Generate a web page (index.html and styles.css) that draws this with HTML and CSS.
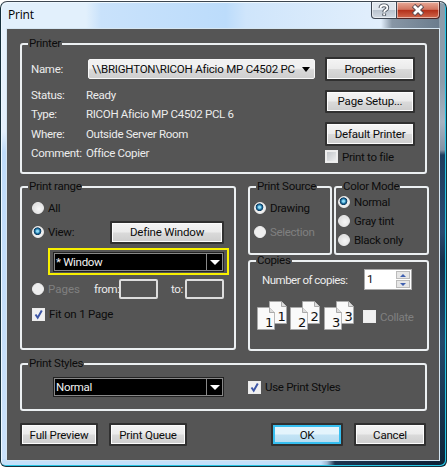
FILE: index.html
```html
<!DOCTYPE html>
<html lang="en">
<head>
<meta charset="utf-8">
<title>Print</title>
<link rel="stylesheet" href="styles.css">
</head>
<body>
<div class="window">
  <header class="titlebar">
    <span class="title">Print</span>
    <div class="caption">
      <span class="help"><svg width="12" height="14" viewBox="0 0 12 14"><path d="M2.500 5Q2.500 2.300 6 2.300T9.300 4.900Q9.300 6.200 7.500 7.100Q6.200 7.800 6.200 9.300M6.200 10.600V12.800" fill="none" stroke="#4a525c" stroke-width="3.800"/><path d="M2.500 5Q2.500 2.300 6 2.300T9.300 4.900Q9.300 6.200 7.500 7.100Q6.200 7.800 6.200 9.300M6.200 10.600V12.300" fill="none" stroke="#fff" stroke-width="1.900"/></svg></span>
      <span class="close"><svg width="14" height="12" viewBox="0 0 14 12"><path d="M2.500 1.500L11.500 10.500M11.500 1.500L2.500 10.500" stroke="#5b4a50" stroke-width="4.800"/><path d="M3 2L11 10M11 2L3 10" stroke="#fff" stroke-width="2.800"/></svg></span>
    </div>
  </header>
  <main class="dialog">
    <fieldset class="group printer">
      <legend>Printer</legend>
      <div class="printer-body">
        <div class="details">
          <label class="lt">Name:</label>
          <div class="select-light"><span>\\BRIGHTON\RICOH Aficio MP C4502 PC</span><i class="arrow"></i></div>
          <span class="lt">Status:</span><span class="lt">Ready</span>
          <span class="lt">Type:</span><span class="lt model">RICOH Aficio MP C4502 PCL 6</span>
          <span class="lt">Where:</span><span class="lt">Outside Server Room</span>
          <span class="lt">Comment:</span><span class="lt">Office Copier</span>
        </div>
        <div class="actions">
          <button>Properties</button>
          <button>Page Setup...</button>
          <button>Default Printer</button>
          <label class="choice"><i class="check dim"></i>Print to file</label>
        </div>
      </div>
    </fieldset>

    <div class="columns">
      <fieldset class="group range">
        <legend>Print range</legend>
        <div class="range-body">
          <label class="choice"><i class="radio"></i>All</label>
          <div class="view-row">
            <label class="choice"><i class="radio on"></i>View:</label>
            <button>Define Window</button>
          </div>
          <div class="highlight"><div class="select-dark"><span>* Window</span><b><i class="arrow"></i></b></div></div>
          <div class="pages-row">
            <label class="choice off"><i class="radio"></i>Pages</label>
            <span class="lt from">from:</span><i class="field"></i>
            <span class="lt to">to:</span><i class="field"></i>
          </div>
          <label class="choice fit"><i class="check"><svg viewBox="0 0 13 13"><path d="M3.500 6.500L5.700 9.700L9.800 2.500" /></svg></i>Fit on 1 Page</label>
        </div>
      </fieldset>
      <div class="side">
        <div class="modes">
          <fieldset class="group source">
            <legend>Print Source</legend>
            <div class="source-body">
              <label class="choice"><i class="radio on"></i>Drawing</label>
              <label class="choice off"><i class="radio"></i>Selection</label>
            </div>
          </fieldset>
          <fieldset class="group color">
            <legend>Color Mode</legend>
            <div class="color-body">
              <label class="choice"><i class="radio on"></i>Normal</label>
              <label class="choice"><i class="radio"></i>Gray tint</label>
              <label class="choice"><i class="radio"></i>Black only</label>
            </div>
          </fieldset>
        </div>
        <fieldset class="group copies">
          <legend>Copies</legend>
          <div class="count">
            <span class="lt">Number of copies:</span>
            <div class="spin"><span>1</span><div class="steps"><b><i class="up"></i></b><b><i class="down"></i></b></div></div>
          </div>
          <div class="collate">
            <svg class="sheets" width="98" height="31" viewBox="0 0 98 31">
              <defs>
                <path id="page" d="M.5.500H12.500L17.500 5.500V22.500H.5Z" fill="#fafafa" stroke="#aaa" stroke-width=".8"/>
                <path id="fold" d="M12.500.5V5.500H17.500" fill="#ddd" stroke="#999" stroke-width=".8"/>
              </defs>
              <g><use href="#page" x="12"/><use href="#fold" x="12"/><text x="20.500" y="19.500">1</text><use href="#page" y="6"/><use href="#fold" y="6"/><text x="8" y="26">1</text></g>
              <g transform="translate(33)"><use href="#page" x="12"/><use href="#fold" x="12"/><text x="20.500" y="19.500">2</text><use href="#page" y="6"/><use href="#fold" y="6"/><text x="8" y="26">2</text></g>
              <g transform="translate(67)"><use href="#page" x="12"/><use href="#fold" x="12"/><text x="20.500" y="19.500">3</text><use href="#page" y="6"/><use href="#fold" y="6"/><text x="8" y="26">3</text></g>
            </svg>
            <label class="choice off"><i class="check"></i>Collate</label>
          </div>
        </fieldset>
      </div>
    </div>

    <fieldset class="group styles">
      <legend>Print Styles</legend>
      <div class="styles-body">
        <div class="select-dark"><span>Normal</span><b><i class="arrow"></i></b></div>
        <label class="choice"><i class="check"><svg viewBox="0 0 13 13"><path d="M3.500 6.500L5.700 9.700L9.800 2.500" /></svg></i>Use Print Styles</label>
      </div>
    </fieldset>

    <footer class="buttons">
      <button class="preview">Full Preview</button>
      <button class="queue">Print Queue</button>
      <button class="ok">OK</button>
      <button class="cancel">Cancel</button>
    </footer>
  </main>
</div>
</body>
</html>
```
FILE: styles.css
```css
* { box-sizing: border-box; }
body {
  margin: 0;
  background: #fff;
  font: 11.5px/14px Roboto, "Liberation Sans", sans-serif;
  letter-spacing: -.3px;
  color: #0c0c0c;
  overflow: hidden;
}
.window {
  width: 447px;
  height: 466px;
  margin-top: 1px;
  padding: 0 6px 5px 5px;
  border: 1px solid #16303c;
  border-top-color: #3c4650;
  border-radius: 7px 7px 6px 6px;
  box-shadow: inset -1px -1px 0 #25c5e4, inset 1px 1px 0 #eef8ff;
  background:
    linear-gradient(#8d9dab 0, #8d9dab 80px, #a7b4c2 120px, #8393a4 148px, #1d3d5e 153px, #2a4a70 230px, #17304a 260px, #23486a 340px, #0e2438) right / 7px 100% no-repeat,
    linear-gradient(90deg, #c3e0fa 0, #c3e0fa 320px, #9db8d2 326px, #1d3550 334px, #0c2036) bottom / 100% 7px no-repeat,
    linear-gradient(90deg, #e2f0fc 0, #e2f0fc 85px, #c9e2fb 100px, #bcdcfb 225px, #cfe5fb 245px, #e2effc 380px, #8796a5 391px, #67798a 100%) top / 100% 28px no-repeat,
    linear-gradient(#e8f3fd 0, #e4f0fc 130px, #bfdcfa 150px, #cbe2fb 100%);
}
.titlebar {
  height: 26px;
  display: flex;
  justify-content: space-between;
}
.title {
  padding: 6px 0 0 2px;
  font: 12px/14px "Open Sans", sans-serif;
  letter-spacing: -.2px;
  color: #000;
}
.caption { display: flex; height: 17px; }
.caption span {
  display: flex;
  align-items: center;
  justify-content: center;
  border: 1px solid #3d4652;
  border-top: 0;
  box-shadow: inset 0 0 0 1px rgba(255, 255, 255, .5);
}
.help { width: 26px; border-radius: 0 0 0 4px; background: linear-gradient(#dfe6ed 0 48%, #b9c3ce 52%, #d3dbe4); }
.caption .close { width: 43px; border-left: 0; border-radius: 0 0 4px 0; border-color: #4f2525; background: linear-gradient(#e8aa98 0, #d17560 46%, #b4301a 52%, #d0674c); }
.dialog {
  width: 434px;
  height: 433px;
  padding: 8px 12px 0 13px;
  border: 1px solid #d5e6f2;
  background: #555;
}
.group {
  flex: none;
  margin: 0;
  padding: 0;
  min-width: 0;
  border: 2px solid #ecf0f2;
  border-radius: 3px;
}
.group legend {
  height: 14px;
  margin-left: 6px;
  padding: 0 1px;
  line-height: 12px;
  white-space: nowrap;
}
.lt { color: #ececec; white-space: nowrap; }
.printer { width: 407px; height: 137px; }
.printer-body { display: flex; padding: 6px 10px 0; gap: 10px; }
.details {
  display: grid;
  grid-template-columns: 56px 227px;
  grid-template-rows: 28px repeat(4, 19.500px);
  align-items: center;
  width: 283px;
}
.details > .lt { margin-left: -1px; }
.details > .lt:nth-child(even) { margin-left: -2px; }
.details > :nth-child(-n+2) { margin-bottom: 4px; }
.select-light {
  display: flex;
  height: 20px;
  padding: 0 4px 0 3px;
  align-items: center;
  justify-content: space-between;
  border: 1px solid #f8f8f8;
  border-radius: 2px;
  background: linear-gradient(#f1f1f1 45%, #d8d8d8 55%, #cfcfcf);
}
.select-light span { white-space: nowrap; letter-spacing: -.22px; }
.arrow { border: 4px solid transparent; border-top: 5px solid #000; border-bottom: 0; }
.actions { display: flex; flex-direction: column; width: 90px; }
.actions button { margin-bottom: 9px; }
.actions .choice { margin-top: -5px; }
button {
  flex: none;
  height: 23px;
  padding: 0;
  border: 2px solid #303030;
  border-radius: 1px;
  background: linear-gradient(#f4f4f4 0, #ebebeb 48%, #dadada 52%, #cdcdcd);
  box-shadow: inset 0 0 0 1px #fcfcfc;
  font: inherit;
  letter-spacing: -.2px;
  color: #0c0c0c;
  white-space: nowrap;
}
.actions button { height: 23.500px; }
.choice { display: flex; align-items: center; gap: 4px; height: 14px; white-space: nowrap; }
.off { color: #808080; }
.check { width: 13px; height: 13px; border: 1px solid #ececec; background: #f0f0f0; flex: none; }
.check.dim { background: linear-gradient(135deg, #bec2c6, #f2f2f2); box-shadow: inset 0 0 0 1px #eee; }
.check svg { display: block; margin: -1px; width: 13px; height: 13px; }
.check path { fill: none; stroke: #3c55a5; stroke-width: 2; }
.radio { width: 12px; height: 12px; border-radius: 50%; flex: none; border: 1px solid #eee; background: radial-gradient(circle at 60% 60%, #f7f7f7, #d8d8d8); }
.off .radio { background: #eee; }
.radio.on { background: radial-gradient(circle at 45% 42%, #8fdcf8 0 1px, #176b9c 2.500px, #123c5e 3.500px, #eee 4.200px); }
.columns { display: flex; gap: 12px; margin-top: 6px; }
.range { width: 216px; height: 170px; }
.range-body { padding: 7px 10px 0; }
.view-row { display: flex; justify-content: space-between; align-items: center; height: 24px; margin-top: 5px; }
.view-row button { width: 114px; }
.highlight { width: 181px; height: 27px; margin: 4px 0 0 16px; padding: 2px 2px 0 3px; border: 2px solid #f8f000; }
.select-dark {
  display: flex;
  width: 171px;
  height: 20px;
  align-items: center;
  border: 1px solid #222;
  outline: 1px solid #888;
  outline-offset: -2px;
  background: #000;
  color: #f2f2f2;
}
.select-dark span { flex: 1; padding-left: 2px; line-height: 12px; }
.select-dark b { display: flex; width: 17px; height: 18px; align-items: center; justify-content: center; border: 1px solid #888; }
.select-dark .arrow { border-top-color: #fff; border-left-width: 5px; border-right-width: 5px; }
.pages-row { display: flex; align-items: center; height: 20px; margin-top: 4px; }
.field { width: 39px; height: 20px; flex: none; border: 2px solid #ddd; border-radius: 2px; }
.pages-row .choice { width: 62px; letter-spacing: 0; }
.from { width: 25px; }
.to { width: 14px; margin-left: 13px; }
.fit { margin-top: 8px; letter-spacing: -.2px; }
.side { flex: none; width: 181px; }
.modes { display: flex; gap: 2px; }
.source { width: 84px; height: 75px; }
.source-body { display: flex; flex-direction: column; gap: 10px; padding: 7px 4px; }
.color { width: 95px; height: 75px; }
.color-body { display: flex; flex-direction: column; gap: 5px; padding: 1px 2px; }
.copies { width: 181px; height: 97px; margin-top: -1px; }
.count { display: flex; align-items: center; justify-content: space-between; height: 21px; margin: 1px 15px 0 12px; }
.count .lt { letter-spacing: -.5px; }
.spin { display: flex; width: 48px; height: 21px; border: 1px solid #aaa; background: #fff; }
.spin span { flex: 1; padding: 2px; }
.steps { display: flex; flex-direction: column; gap: 1px; width: 16px; padding: 1px; }
.steps b { display: flex; flex: 1; align-items: center; justify-content: center; background: #e6e6e6; border: 1px solid #bbb; }
.up, .down { border: 3px solid transparent; border-top: 0; border-bottom: 3px solid #4060b0; }
.down { border-top: 3px solid #4060b0; border-bottom: 0; }
.collate { display: flex; align-items: center; gap: 8px; margin: 11px 0 0 7px; }
.sheets { flex: none; overflow: visible; }
.sheets text { font: 13px "DejaVu Sans", sans-serif; fill: #111; }
.styles { width: 407px; height: 54px; margin-top: 6px; }
.styles-body { display: flex; align-items: center; gap: 24px; padding: 6px 0 0 31px; }
.buttons { display: flex; margin-top: 12px; }
.preview { width: 78px; }
.queue { width: 78px; margin-left: 11px; }
.ok { width: 72px; margin-left: 84px; background: linear-gradient(#e4f4fc 45%, #c2e3f5 55%, #b5dbef); box-shadow: inset 0 0 0 2px #36bff0; }
.cancel { width: 72px; margin-left: 11px; }
```
